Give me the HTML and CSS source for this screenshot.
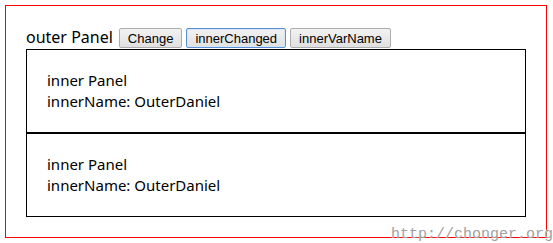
FILE: index.html
```html
<!DOCTYPE html>
<html lang="en">
<head>
    <meta charset="UTF-8">
    <meta name="viewport" content="width=device-width, initial-scale=1.0">
    <title>outer Panel</title>
    <link rel="stylesheet" href="styles.css">
</head>
<body>
    <div class="outer">
        <div class="outer-head">
            <span class="outer-title">outer Panel</span>
            <button class="btn">Change</button>
            <button class="btn btn-focus">innerChanged</button>
            <button class="btn">innerVarName</button>
        </div>
        <div class="inner">
            <div>inner Panel</div>
            <div>innerName: OuterDaniel</div>
        </div>
        <div class="inner">
            <div>inner Panel</div>
            <div>innerName: OuterDaniel</div>
        </div>
    </div>
    <div class="watermark">http://chonger.org</div>
</body>
</html>
```

FILE: styles.css
```css
body {
    margin: 5px;
    font-family: "Noto Sans", "Open Sans", sans-serif;
    font-size: 16px;
    color: #000;
    background: #fff;
}
.outer {
    width: 500px;
    padding: 20px;
    border: 1px solid red;
}
.outer-head {
    display: flex;
    align-items: flex-end;
    gap: 4px;
    height: 23px;
    line-height: 23px;
}
.outer-title {
    margin-right: 2px;
}
.btn {
    height: 20px;
    padding: 0 8px;
    margin-bottom: 1px;
    font-family: "Liberation Sans", Arial, sans-serif;
    font-size: 13px;
    color: #000;
    background: linear-gradient(#f2f2f2, #e0e0e0);
    border: 1px solid #adadad;
    border-radius: 2px;
}
.btn-focus {
    border-color: #5b8fd6;
    box-shadow: inset 0 0 0 1px #d6e6f8;
}
.inner {
    padding: 20px;
    border: 1px solid #000;
    font-size: 15px;
    line-height: 21px;
}
.watermark {
    position: absolute;
    right: 0;
    top: 226px;
    font-family: "Liberation Mono", monospace;
    font-size: 15px;
    color: #a0a0a0;
    text-shadow: 0 0 2px #fff;
}
```
